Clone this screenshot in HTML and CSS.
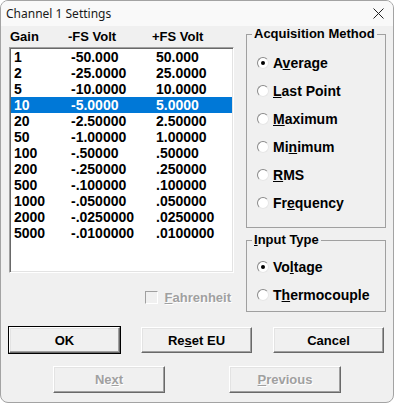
FILE: index.html
```html
<!DOCTYPE html>
<html lang="en">
<head>
    <meta charset="UTF-8">
    <meta name="viewport" content="width=device-width, initial-scale=1.0">
    <title>Channel 1 Settings</title>
    <link rel="stylesheet" href="styles.css">
</head>
<body>
    <div class="window">
        <div class="titlebar">
            <span class="title">Channel 1 Settings</span>
            <span class="close">
                <svg width="11" height="11" viewBox="0 0 11 11"><path d="M0.5 0.5L10.5 10.5M10.5 0.5L0.5 10.5" stroke="#1f1f1f" stroke-width="1"/></svg>
            </span>
        </div>
        <div class="main">
            <div class="left">
                <div class="head"><span>Gain</span><span>-FS Volt</span><span>+FS Volt</span></div>
                <ul class="list">
                    <li><span>1</span><span>-50.000</span><span>50.000</span></li>
                    <li><span>2</span><span>-25.0000</span><span>25.0000</span></li>
                    <li><span>5</span><span>-10.0000</span><span>10.0000</span></li>
                    <li class="sel"><span>10</span><span>-5.0000</span><span>5.0000</span></li>
                    <li><span>20</span><span>-2.50000</span><span>2.50000</span></li>
                    <li><span>50</span><span>-1.00000</span><span>1.00000</span></li>
                    <li><span>100</span><span>-.50000</span><span>.50000</span></li>
                    <li><span>200</span><span>-.250000</span><span>.250000</span></li>
                    <li><span>500</span><span>-.100000</span><span>.100000</span></li>
                    <li><span>1000</span><span>-.050000</span><span>.050000</span></li>
                    <li><span>2000</span><span>-.0250000</span><span>.0250000</span></li>
                    <li><span>5000</span><span>-.0100000</span><span>.0100000</span></li>
                </ul>
                <div class="check"><span class="box"></span><span><u>F</u>ahrenheit</span></div>
            </div>
            <div class="right">
                <fieldset class="group">
                    <legend>Acquisition Method</legend>
                    <div class="opts">
                        <div class="opt"><span class="radio on"></span><span>A<u>v</u>erage</span></div>
                        <div class="opt"><span class="radio"></span><span><u>L</u>ast Point</span></div>
                        <div class="opt"><span class="radio"></span><span><u>M</u>aximum</span></div>
                        <div class="opt"><span class="radio"></span><span>Mi<u>n</u>imum</span></div>
                        <div class="opt"><span class="radio"></span><span><u>R</u>MS</span></div>
                        <div class="opt"><span class="radio"></span><span>Fr<u>e</u>quency</span></div>
                    </div>
                </fieldset>
                <fieldset class="group input">
                    <legend><u>I</u>nput Type</legend>
                    <div class="opts">
                        <div class="opt"><span class="radio on"></span><span>Vo<u>l</u>tage</span></div>
                        <div class="opt"><span class="radio"></span><span>T<u>h</u>ermocouple</span></div>
                    </div>
                </fieldset>
            </div>
        </div>
        <div class="buttons">
            <button class="btn default">OK</button>
            <button class="btn">Re<u>s</u>et EU</button>
            <button class="btn">Cancel</button>
        </div>
        <div class="nav">
            <button class="btn" disabled>Ne<u>x</u>t</button>
            <button class="btn" disabled><u>P</u>revious</button>
        </div>
    </div>
</body>
</html>
```

FILE: styles.css
```css
body{
    margin: 0;
    background: #fff;
    font-family: "Liberation Sans", Arial, sans-serif;
    color: #000;
}
u{
    text-underline-offset: 1px;
}
.window{
    width: 394px;
    height: 403px;
    box-sizing: border-box;
    border: 1px solid #a3a3a3;
    border-radius: 8px;
    background: #f0f0f0;
    overflow: hidden;
}
.titlebar{
    height: 25px;
    display: flex;
    align-items: center;
    justify-content: space-between;
    padding: 0 9px 0 5px;
    background: #f9f9f9;
    font-family: "Noto Sans", sans-serif;
    font-size: 12px;
    color: #1a1a1a;
}
.close svg{
    display: block;
}
.main{
    display: grid;
    grid-template-columns: 225px 140px;
    column-gap: 12px;
    padding-left: 8px;
}
.head{
    display: grid;
    grid-template-columns: 58px 84px auto;
    height: 16px;
    line-height: 16px;
    padding: 3px 0 0 1px;
    margin-bottom: 2px;
    font-size: 13px;
    font-weight: bold;
}
.list{
    margin: 0;
    padding: 1px;
    list-style: none;
    height: 226px;
    box-sizing: border-box;
    background: #fff;
    border: 1px solid;
    border-color: #a0a0a0 #fff #fff #a0a0a0;
    box-shadow: inset 1px 1px #696969, inset -1px -1px #e3e3e3;
}
.list li{
    display: grid;
    grid-template-columns: 57px 85px auto;
    height: 16px;
    line-height: 16px;
    padding-left: 3px;
    font-size: 14px;
    font-weight: bold;
}
.list li.sel{
    background: #0078d7;
    color: #fff;
}
.check{
    display: flex;
    align-items: center;
    justify-content: flex-end;
    height: 16px;
    margin-top: 16px;
    padding-right: 3px;
    font-size: 13px;
    font-weight: bold;
    color: #a0a0a0;
    text-shadow: 1px 1px #fff;
}
.check .box{
    width: 11px;
    height: 11px;
    border: 1px solid;
    border-color: #a0a0a0 #fff #fff #a0a0a0;
    background: #f0f0f0;
    margin-right: 7px;
}
.group{
    margin: 0;
    padding: 0;
    border: 1px solid #a0a0a0;
}
.group legend{
    margin-left: 5px;
    padding: 0 2px;
    font-size: 13px;
    font-weight: bold;
    line-height: 16px;
}
.group .opts{
    padding: 7px 0 10px 10px;
}
.group.input{
    margin-top: 4px;
}
.group.input .opts{
    padding: 5px 0 2px 10px;
}
.opt{
    display: flex;
    align-items: center;
    height: 28px;
    font-size: 14px;
    font-weight: bold;
}
.radio{
    width: 10px;
    height: 10px;
    border-radius: 50%;
    border: 1px solid;
    border-color: #8a8a8a #e6e6e6 #e6e6e6 #8a8a8a;
    background: #fff;
    margin-right: 4px;
    display: flex;
    align-items: center;
    justify-content: center;
}
.radio.on::after{
    content: "";
    width: 4px;
    height: 4px;
    border-radius: 50%;
    background: #000;
}
.buttons{
    display: flex;
    gap: 21px;
    padding-left: 8px;
    margin-top: 15px;
}
.nav{
    display: flex;
    justify-content: center;
    gap: 64px;
    margin-top: 13px;
}
.btn{
    width: 111px;
    height: 26px;
    padding: 0;
    font-family: "Liberation Sans", Arial, sans-serif;
    font-size: 13px;
    font-weight: bold;
    color: #000;
    background: #f0f0f0;
    border: 1px solid;
    border-color: #fff #696969 #696969 #fff;
    box-shadow: inset -1px -1px #a0a0a0, inset 1px 1px #e3e3e3;
}
.btn.default{
    outline: 1px solid #000;
}
.nav .btn{
    width: 112px;
    height: 27px;
}
.btn:disabled{
    color: #a0a0a0;
    text-shadow: 1px 1px #fff;
}
```
